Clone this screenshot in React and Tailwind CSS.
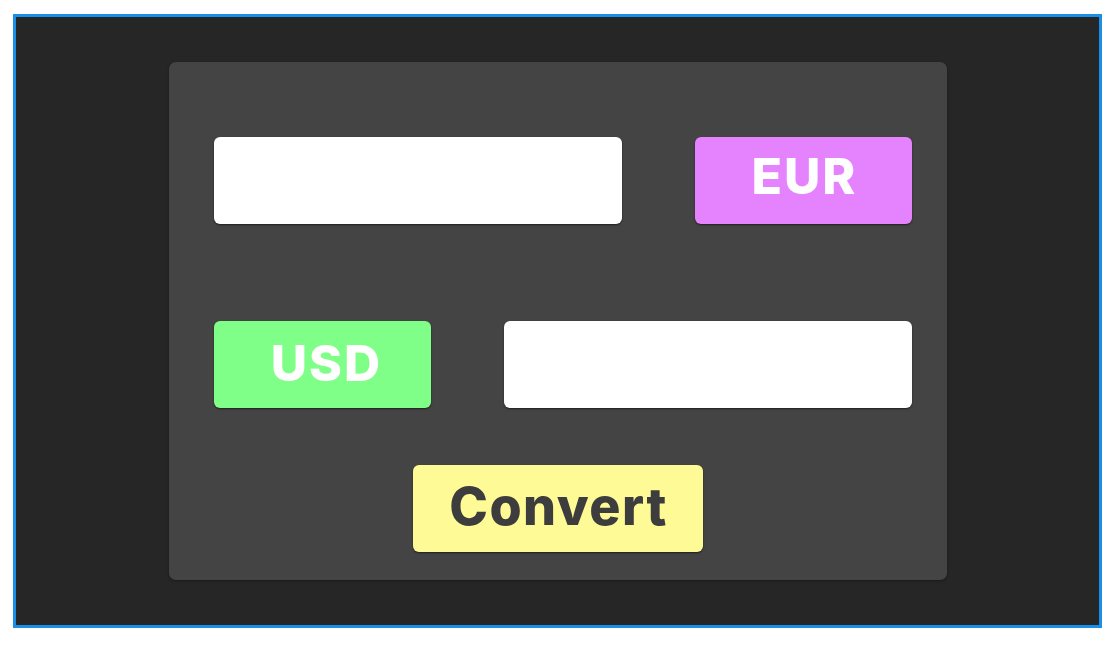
import React, { useState } from 'react';

const font = { fontFamily: 'Inter, "Liberation Sans", sans-serif' };

const Field = ({ value, onChange }) => (
  <input
    value={value}
    onChange={(e) => onChange(e.target.value)}
    className="w-[408px] h-[87px] rounded-[6px] bg-white shadow-[0_1px_2px_rgba(0,0,0,0.55)] outline-none px-4 text-3xl text-[#333]"
  />
);

const CurrencyButton = ({ label, className }) => (
  <button
    className={`w-[217px] h-[87px] rounded-[6px] text-white font-extrabold text-[50px] leading-none tracking-[2px] shadow-[0_1px_2px_rgba(0,0,0,0.55)] ${className}`}
  >
    {label}
  </button>
);

const App = () => {
  const [from, setFrom] = useState('');
  const [to, setTo] = useState('');

  return (
    <div className="w-[1120px] h-[645px] bg-white pl-[13px] pt-[14px]" style={font}>
      <div className="w-[1089px] h-[614px] border-[3px] border-[#1a8fe8] bg-[#262626] flex items-center justify-center">
        <div className="w-[778px] h-[518px] rounded-[7px] bg-[#444444] shadow-[0_1px_3px_rgba(0,0,0,0.35)] pt-[75px] flex flex-col">
          <div className="flex items-center gap-[73px] pl-[45px]">
            <Field value={from} onChange={setFrom} />
            <CurrencyButton label="EUR" className="bg-[#e583ff] pl-[3px] pb-[9px]" />
          </div>
          <div className="flex items-center gap-[73px] pl-[45px] mt-[97px]">
            <CurrencyButton label="USD" className="bg-[#80ff88] pl-[9px] pb-[4px]" />
            <Field value={to} onChange={setTo} />
          </div>
          <div className="flex justify-center mt-[57px]">
            <button className="w-[290px] h-[87px] rounded-[6px] bg-[#fefa96] text-[#3d3d3d] font-extrabold text-[52px] leading-none tracking-[1.5px] pl-[2px] pb-[4px] shadow-[0_1px_2px_rgba(0,0,0,0.55)]">
              Convert
            </button>
          </div>
        </div>
      </div>
    </div>
  );
};

export default App;
